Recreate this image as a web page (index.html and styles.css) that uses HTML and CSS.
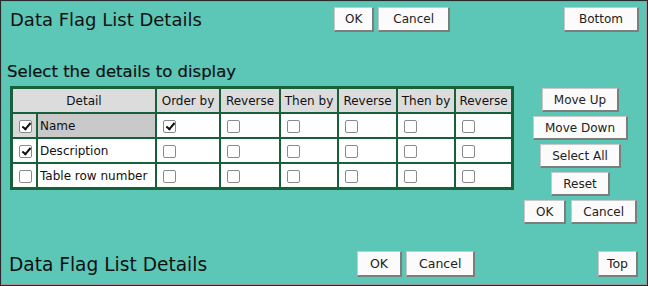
FILE: index.html
```html
<!DOCTYPE html>
<html lang="en">
<head>
    <meta charset="UTF-8">
    <title>Data Flag List Details</title>
    <link rel="stylesheet" href="styles.css">
</head>
<body>
<div class="frame">
    <!-- Top title bar -->
    <div class="topbar">
        <div class="title">Data Flag List Details</div>
        <div class="btn-group">
            <button class="btn">OK</button>
            <button class="btn wide">Cancel</button>
        </div>
        <button class="btn wide end">Bottom</button>
    </div>

    <div class="main">
        <div class="subtitle">Select the details to display</div>
        <div class="content">
            <table class="details">
                <colgroup>
                    <col style="width: 23px">
                    <col style="width: 117px">
                    <col style="width: 62px">
                    <col style="width: 58px">
                    <col style="width: 56px">
                    <col style="width: 57px">
                    <col style="width: 56px">
                    <col style="width: 55px">
                </colgroup>
                <tr>
                    <th colspan="2">Detail</th>
                    <th>Order by</th>
                    <th>Reverse</th>
                    <th>Then by</th>
                    <th>Reverse</th>
                    <th>Then by</th>
                    <th>Reverse</th>
                </tr>
                <tr class="selected">
                    <td class="sel-cb"><span class="cb on"></span></td>
                    <td class="sel-name">Name</td>
                    <td><span class="cb on"></span></td>
                    <td><span class="cb"></span></td>
                    <td><span class="cb"></span></td>
                    <td><span class="cb"></span></td>
                    <td><span class="cb"></span></td>
                    <td><span class="cb"></span></td>
                </tr>
                <tr>
                    <td><span class="cb on"></span></td>
                    <td>Description</td>
                    <td><span class="cb"></span></td>
                    <td><span class="cb"></span></td>
                    <td><span class="cb"></span></td>
                    <td><span class="cb"></span></td>
                    <td><span class="cb"></span></td>
                    <td><span class="cb"></span></td>
                </tr>
                <tr>
                    <td><span class="cb"></span></td>
                    <td>Table row number</td>
                    <td><span class="cb"></span></td>
                    <td><span class="cb"></span></td>
                    <td><span class="cb"></span></td>
                    <td><span class="cb"></span></td>
                    <td><span class="cb"></span></td>
                    <td><span class="cb"></span></td>
                </tr>
            </table>

            <!-- Side actions -->
            <div class="side">
                <button class="btn">Move Up</button>
                <button class="btn">Move Down</button>
                <button class="btn">Select All</button>
                <button class="btn">Reset</button>
                <div class="btn-row">
                    <button class="btn">OK</button>
                    <button class="btn">Cancel</button>
                </div>
            </div>
        </div>
    </div>

    <!-- Bottom bar -->
    <div class="bottombar">
        <div class="title">Data Flag List Details</div>
        <div class="btn-group">
            <button class="btn">OK</button>
            <button class="btn">Cancel</button>
        </div>
        <button class="btn narrow end">Top</button>
    </div>
</div>
</body>
</html>
```

FILE: styles.css
```css
/* Global styles */
body {
    margin: 0;
    padding: 0;
    font-family: "DejaVu Sans", Verdana, sans-serif;
    color: #111;
}

.frame {
    box-sizing: border-box;
    width: 648px;
    height: 286px;
    background-color: #5cc6b7;
    border: 1px solid #2a2a2a;
    box-shadow: inset 0 0 0 1px #9a9a9a;
    display: grid;
    grid-template-rows: 39px 1fr 39px;
}

/* Buttons */
.btn {
    box-sizing: border-box;
    height: 24px;
    padding: 0 11px;
    font-family: inherit;
    font-size: 12px;
    color: #222;
    background-color: #fbfbfb;
    border: 1px solid #c8c8c8;
    border-right: 2px solid #7d7d7d;
    border-bottom: 2px solid #7d7d7d;
    border-radius: 0;
    cursor: pointer;
}

.btn-group {
    display: flex;
    gap: 4px;
}

/* Top bar */
.topbar {
    display: grid;
    grid-template-columns: 325px auto 1fr;
    align-items: center;
    padding: 6px 8px 0 8px;
    align-self: start;
}

.topbar .btn {
    height: 25px;
    padding: 0 10px;
}

.topbar .btn.wide {
    padding: 0 14px;
}

.title {
    font-size: 18px;
    padding-left: 1px;
}

.end {
    justify-self: end;
}

/* Main section */
.main {
    padding: 22px 0 0 6px;
}

.subtitle {
    font-size: 16.5px;
    line-height: 20px;
    -webkit-text-stroke: 0.2px #111;
}

.content {
    display: flex;
    align-items: flex-start;
    margin-top: 4px;
}

/* Details table */
.details {
    margin-left: 3px;
    table-layout: fixed;
    width: 504px;
    border-collapse: separate;
    border-spacing: 2px;
    border: 1px solid #17603a;
    background-color: #17603a;
    font-size: 12px;
}

.details th,
.details td {
    height: 23px;
    padding: 0 2px;
    background-color: #fff;
    white-space: nowrap;
    overflow: hidden;
}

.details th {
    font-weight: normal;
    background-color: #dcdcdc;
    text-align: center;
}

.details td {
    text-align: left;
}

.details .sel-cb {
    background-color: #d9d9d9;
}

.details .sel-name {
    background-color: #c9c9c9;
}

/* Checkbox drawing */
.cb {
    display: inline-block;
    box-sizing: border-box;
    width: 13px;
    height: 13px;
    margin-left: 4px;
    vertical-align: middle;
    background-color: #fff;
    border: 1px solid #8a8a8a;
    border-radius: 2px;
    position: relative;
}

.cb.on::after {
    content: "";
    position: absolute;
    left: 3.5px;
    top: 0px;
    width: 3px;
    height: 7px;
    border-right: 2px solid #111;
    border-bottom: 2px solid #111;
    transform: rotate(40deg);
}

/* Side buttons */
.side {
    flex: 1;
    display: flex;
    flex-direction: column;
    align-items: center;
    gap: 4px;
    padding-top: 2px;
}

.btn-row {
    display: flex;
    gap: 5px;
}

/* Bottom bar */
.bottombar {
    display: grid;
    grid-template-columns: 349px auto 1fr;
    align-items: center;
    padding: 0 9px 4px 7px;
}

.bottombar .title {
    font-size: 20px;
    transform: scaleX(0.93);
    transform-origin: left center;
}

.bottombar .btn {
    height: 26px;
    padding: 0 12px;
    font-size: 12.5px;
}

.bottombar .btn.narrow {
    padding: 0 8px;
}
```
